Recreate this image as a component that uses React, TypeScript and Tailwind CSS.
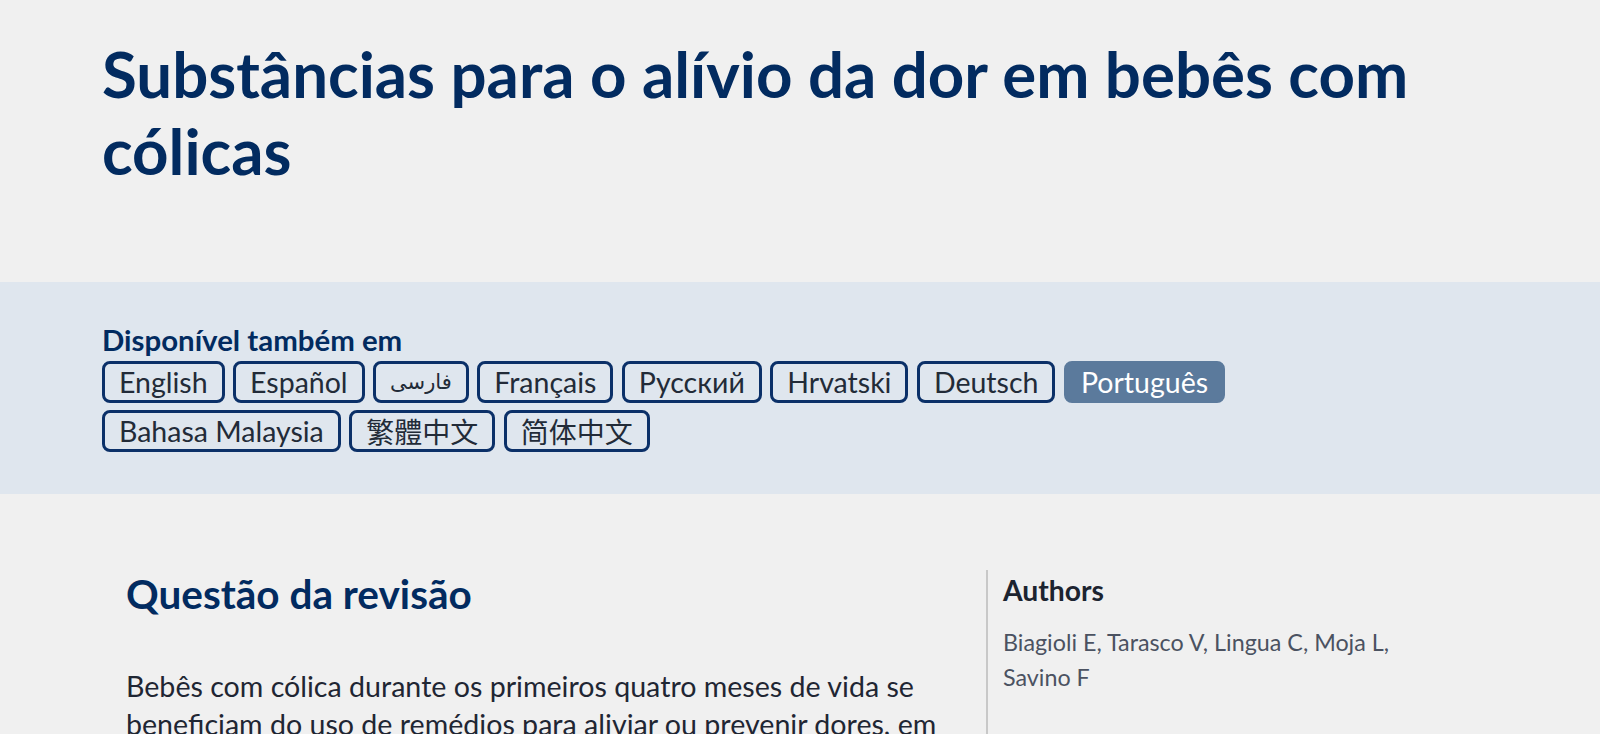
const languages: { label: string; active?: boolean; script?: "tc" | "sc" | "fa" }[] = [
  { label: "English" },
  { label: "Español" },
  { label: "فارسی", script: "fa" },
  { label: "Français" },
  { label: "Русский" },
  { label: "Hrvatski" },
  { label: "Deutsch" },
  { label: "Português", active: true },
  { label: "Bahasa Malaysia" },
  { label: "繁體中文", script: "tc" },
  { label: "简体中文", script: "sc" },
];

function LanguageButton({ label, active, script }: { label: string; active?: boolean; script?: "tc" | "sc" | "fa" }) {
  const family =
    script === "tc"
      ? "font-['Noto_Sans_CJK_TC',sans-serif] text-[28px]"
      : script === "sc"
        ? "font-['Noto_Sans_CJK_SC',sans-serif] text-[28px]"
        : script === "fa"
          ? "font-['DejaVu_Sans',sans-serif] text-[21px]"
          : "font-['Lato','Noto_Sans',sans-serif] text-[28.5px]";
  return (
    <a
      href="#"
      lang={script === "fa" ? "fa" : undefined}
      dir={script === "fa" ? "rtl" : undefined}
      className={
        "flex h-[42px] items-center whitespace-nowrap rounded-[8px] border-[3px] px-[14px] leading-[36px] " +
        family +
        " " +
        (active
          ? "border-[#5b7a9c] bg-[#5b7a9c] text-white"
          : "border-[#0b3068] bg-transparent text-[#222b38]")
      }
    >
      {label}
    </a>
  );
}

export default function App() {
  return (
    <div className="min-h-[734px] bg-[#f0f0f0] font-['Lato','Noto_Sans',sans-serif]">
      {/* Page title */}
      <header className="pl-[102px] pt-[35px] pb-[93px]">
        <h1 className="max-w-[1380px] text-[63.6px] font-bold leading-[77px] text-[#022b60]">
          Substâncias para o alívio da dor em bebês com cólicas
        </h1>
      </header>

      {/* Translations band */}
      <section className="bg-[#dfe6ee] pl-[102px] pt-[40px] pb-[42px]">
        <h2 className="text-[29.4px] font-bold leading-[35px] text-[#022b60]">Disponível também em</h2>
        <nav className="mt-[4px] flex max-w-[1300px] flex-wrap gap-x-[8.5px] gap-y-[7px]">
          {languages.map((l) => (
            <LanguageButton key={l.label} {...l} />
          ))}
        </nav>
      </section>

      {/* Summary body */}
      <main className="flex pl-[102px] pt-[76px]">
        <article className="w-[884px] shrink-0 pl-[24px] pr-[48px]">
          <h2 className="text-[40.5px] font-bold leading-[48px] text-[#022b60]">Questão da revisão</h2>
          <p className="mt-[49px] text-[28.6px] leading-[38px] text-[#1f2633]">
            Bebês com cólica durante os primeiros quatro meses de vida se beneficiam do uso de remédios para
            aliviar ou prevenir dores, em comparação com placebo ou nenhum tratamento?
          </p>
        </article>
        <aside className="w-[430px] shrink-0 border-l-2 border-[#c8c8c8] pl-[15px] pt-[2px]">
          <h3 className="text-[28.3px] font-bold leading-[36px] text-[#1c2430]">Authors</h3>
          <p className="mt-[17px] text-[23.3px] leading-[35px] text-[#4b5261]">
            Biagioli E, Tarasco V, Lingua C, Moja L, Savino F
          </p>
        </aside>
      </main>
    </div>
  );
}
